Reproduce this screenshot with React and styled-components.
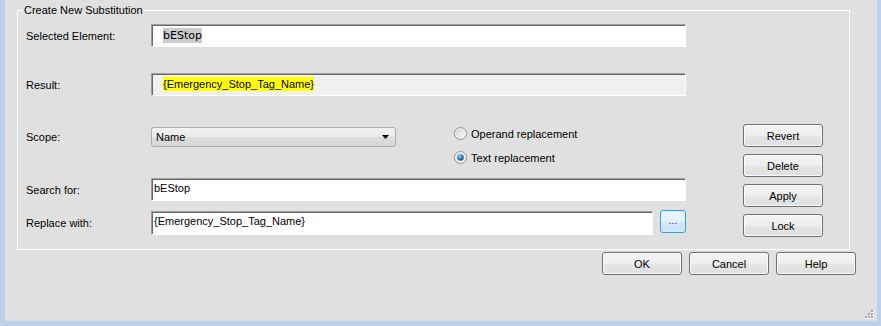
import React from 'react';
import styled, {createGlobalStyle} from 'styled-components';

const GlobalStyle = createGlobalStyle`
    html, body{
        margin:0;
        padding:0;
        background:#b9d1ea;
    }
    body{
        font-family:"Liberation Sans", Arial, sans-serif;
        font-size:11px;
        color:#000;
    }
`;

const Frame = styled.div`
    width:881px;
    height:326px;
    box-sizing:border-box;
    padding:0 4px 5px 5px;
    background:#b9d1ea;
    display:flex;
`;

const Dialog = styled.div`
    flex:1;
    background:#e0e0e0;
    display:flex;
    flex-direction:column;
`;

const Group = styled.fieldset`
    margin:3px 27px 0 12px;
    padding:0 25px 12px 8px;
    border:1px solid #fff;
    min-width:0;
    display:flex;
`;

const Legend = styled.legend`
    padding:0 1px;
    margin-left:-3px;
    line-height:14px;
    font-size:11px;
`;

const LeftCol = styled.div`
    width:660px;
    display:flex;
    flex-direction:column;
`;

const Row = styled.div`
    display:flex;
    align-items:${props=>props.$align || 'center'};
    margin-top:${props=>props.$mt}px;
    height:${props=>props.$h ? props.$h + 'px' : 'auto'};
`;

const Label = styled.div`
    width:125px;
    flex:none;
    line-height:${props=>props.$lh ? props.$lh + 'px' : 'normal'};
`;

const TextBox = styled.div`
    width:${props=>props.$w}px;
    height:${props=>props.$h}px;
    box-sizing:border-box;
    border:1px solid;
    border-color:#a0a0a0 #fff #fff #a0a0a0;
    box-shadow:inset 1px 1px #696969;
    background:${props=>props.$bg || '#fff'};
    padding:${props=>props.$pad || '3px 0 0 2px'};
    white-space:nowrap;
    overflow:hidden;
    flex:none;
`;

const Highlight = styled.span`
    background:${props=>props.$color};
    font-family:${props=>props.$mono ? '"DejaVu Sans", sans-serif' : 'inherit'};
    font-size:11px;
    padding:1px 0;
`;

const ComboBox = styled.div`
    width:245px;
    height:20px;
    box-sizing:border-box;
    border:1px solid #acacac;
    border-radius:3px;
    background:linear-gradient(#f2f2f2, #ebebeb 50%, #dddddd 51%, #d6d6d6);
    display:flex;
    align-items:center;
    justify-content:space-between;
    padding:0 6px 0 4px;
    flex:none;
`;

const RadioGroup = styled.div`
    margin-left:58px;
    display:flex;
    flex-direction:column;
    gap:11px;
`;

const RadioItem = styled.div`
    display:flex;
    align-items:center;
    gap:4px;
    height:13px;
`;

const RightCol = styled.div`
    margin-left:57px;
    padding-top:107px;
    display:flex;
    flex-direction:column;
    gap:7px;
`;

const Button = styled.div`
    width:${props=>props.$w || 80}px;
    height:23px;
    box-sizing:border-box;
    border:1px solid #707070;
    border-radius:3px;
    background:linear-gradient(#f4f4f4, #eeeeee 50%, #e6e6e6 51%, #dedede);
    box-shadow:inset 0 0 0 1px #fbfbfb;
    display:flex;
    align-items:center;
    justify-content:center;
    flex:none;
`;

const BrowseButton = styled(Button)`
    width:26px;
    margin-left:7px;
    align-self:flex-start;
    margin-top:-1px;
    border-color:#3c9fd8;
    background:linear-gradient(#eef7fd, #e2f1fb 50%, #d2e9f8 51%, #c8e3f6);
    box-shadow:inset 0 0 0 1px #cfeefc;
    font-size:10px;
    color:#4a2a5a;
    padding-bottom:3px;
`;

const Footer = styled.div`
    display:flex;
    justify-content:flex-end;
    gap:7px;
    margin-top:2px;
    padding-right:21px;
`;

const GripRow = styled.div`
    margin-top:auto;
    display:flex;
    justify-content:flex-end;
    padding:0 3px 2px 0;
`;

function Radio({checked}){
    return(
        <svg width="13" height="13" viewBox="0 0 13 13">
            <defs>
                <linearGradient id={checked ? 'rc' : 'ru'} x1="0" y1="0" x2="1" y2="1">
                    <stop offset="0" stopColor="#d4d4d4"/>
                    <stop offset="1" stopColor="#fbfbfb"/>
                </linearGradient>
                <radialGradient id="dot" cx="0.4" cy="0.35" r="0.7">
                    <stop offset="0" stopColor="#9fdcff"/>
                    <stop offset="0.5" stopColor="#2a86c8"/>
                    <stop offset="1" stopColor="#0c3d6e"/>
                </radialGradient>
            </defs>
            <circle cx="6.5" cy="6.5" r="6" fill="#f4f4f4" stroke="#8e8f8f"/>
            <circle cx="6.5" cy="6.5" r="4.5" fill={`url(#${checked ? 'rc' : 'ru'})`}/>
            {checked && <circle cx="6.5" cy="6.5" r="3.2" fill="url(#dot)"/>}
        </svg>
    )
}

function Grip(){
    const dots = [[6,0],[3,3],[6,3],[0,6],[3,6],[6,6]];
    return(
        <svg width="9" height="9" viewBox="0 0 9 9">
            {dots.map(([x,y], i)=>(
                <g key={i}>
                    <rect x={x+1} y={y+1} width="2" height="2" fill="#fff"/>
                    <rect x={x} y={y} width="2" height="2" fill="#a8a8a8"/>
                </g>
            ))}
        </svg>
    )
}

export default function App(){
    return(
        <Frame>
            <GlobalStyle/>
            <Dialog>
                <Group>
                    <Legend>Create New Substitution</Legend>
                    <LeftCol>
                        <Row $mt={7}>
                            <Label>Selected Element:</Label>
                            <TextBox $w={535} $h={23} $pad="4px 0 0 11px">
                                <Highlight $color="#cccccc" $mono>bEStop</Highlight>
                            </TextBox>
                        </Row>
                        <Row $mt={26}>
                            <Label>Result:</Label>
                            <TextBox $w={535} $h={23} $bg="#f0f0f0" $pad="4px 0 0 11px">
                                <Highlight $color="#ffff00">{'{Emergency_Stop_Tag_Name}'}</Highlight>
                            </TextBox>
                        </Row>
                        <Row $mt={31} $h={44} $align="flex-start">
                            <Label $lh={20}>Scope:</Label>
                            <ComboBox>
                                <span>Name</span>
                                <svg width="7" height="4" viewBox="0 0 7 4">
                                    <path d="M0 0 H7 L3.5 4 Z" fill="#000"/>
                                </svg>
                            </ComboBox>
                            <RadioGroup>
                                <RadioItem><Radio/><span>Operand replacement</span></RadioItem>
                                <RadioItem><Radio checked/><span>Text replacement</span></RadioItem>
                            </RadioGroup>
                        </Row>
                        <Row $mt={7}>
                            <Label>Search for:</Label>
                            <TextBox $w={535} $h={23}>bEStop</TextBox>
                        </Row>
                        <Row $mt={10}>
                            <Label>Replace with:</Label>
                            <TextBox $w={502} $h={24}>{'{Emergency_Stop_Tag_Name}'}</TextBox>
                            <BrowseButton>...</BrowseButton>
                        </Row>
                    </LeftCol>
                    <RightCol>
                        <Button>Revert</Button>
                        <Button>Delete</Button>
                        <Button>Apply</Button>
                        <Button>Lock</Button>
                    </RightCol>
                </Group>
                <Footer>
                    <Button>OK</Button>
                    <Button>Cancel</Button>
                    <Button>Help</Button>
                </Footer>
                <GripRow><Grip/></GripRow>
            </Dialog>
        </Frame>
    )
}
